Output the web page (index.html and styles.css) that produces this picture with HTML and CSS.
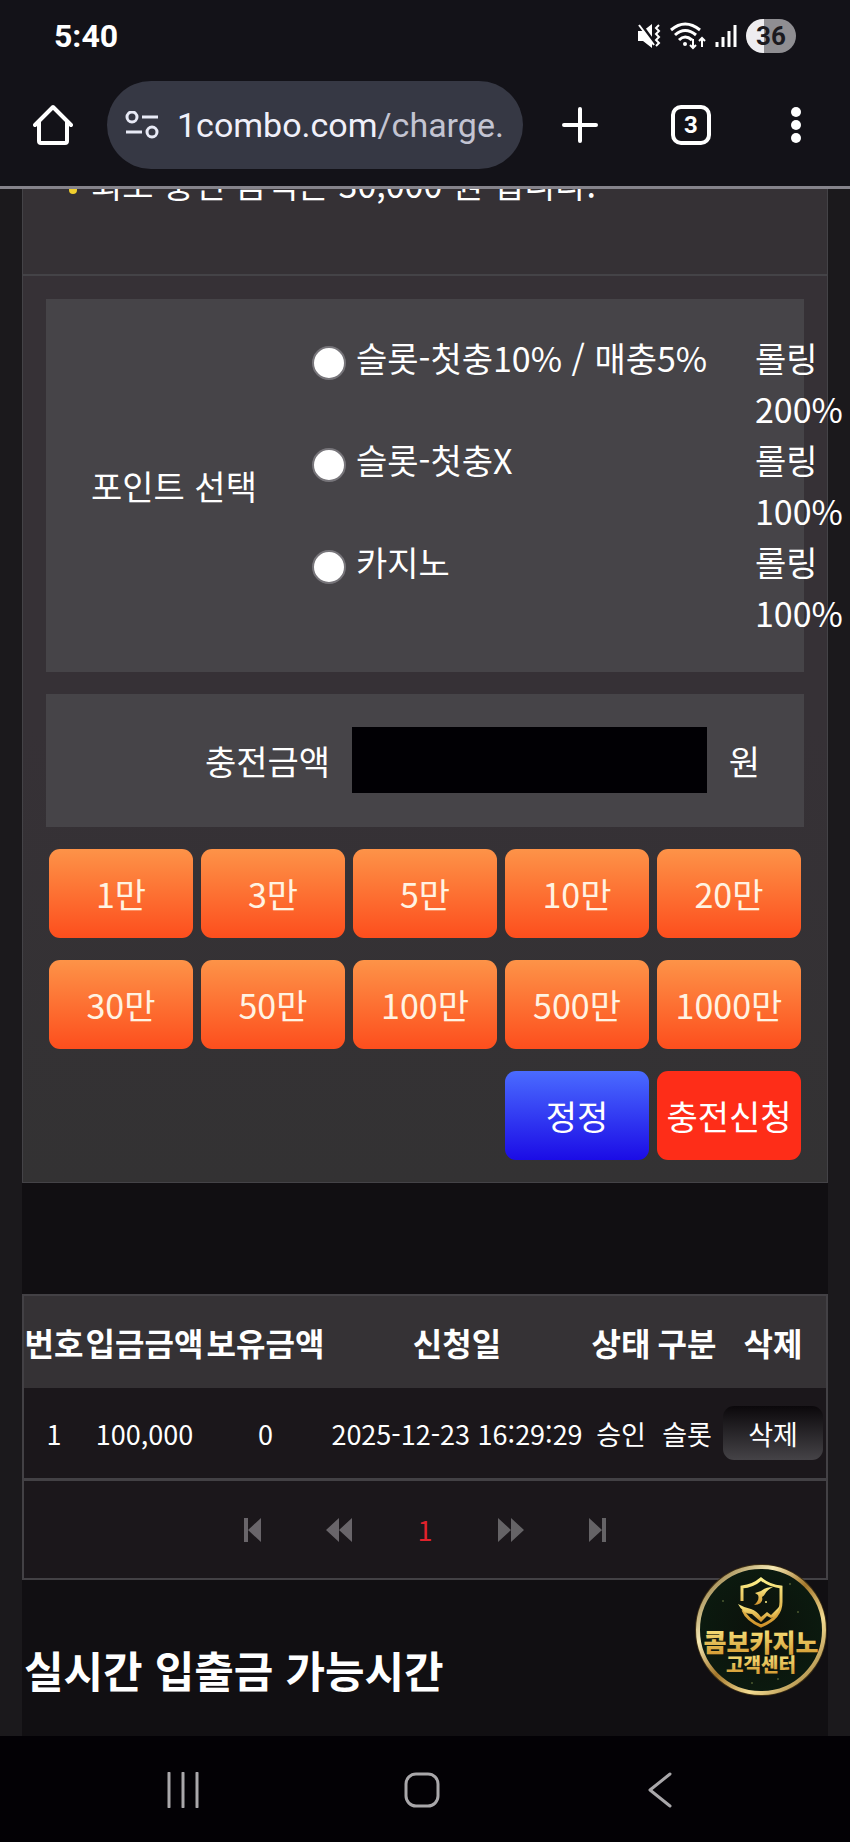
FILE: index.html
```html
<!DOCTYPE html>
<html lang="ko">
<head>
    <meta charset="UTF-8">
    <meta name="viewport" content="width=device-width, initial-scale=1">
    <title>충전신청</title>
    <link rel="stylesheet" href="styles.css">
</head>
<body>
<div class="status-bar">
    <span class="clock">5:40</span>
    <div class="status-icons">
        <svg class="ico-mute" width="24" height="26" viewBox="0 0 24 26">
            <path d="M1 8h5l9-7v24l-9-7H1z" fill="#fff"/>
            <path d="M3 0l16 22" stroke="#131218" stroke-width="3"/>
            <path d="M2 2l15 20" stroke="#fff" stroke-width="2"/>
            <path d="M22 2l-3 3 3 3-3 3 3 3-3 3 3 3-3 3" fill="none" stroke="#fff" stroke-width="2"/>
        </svg>
        <svg class="ico-wifi" width="36" height="28" viewBox="0 0 36 28">
            <g fill="none" stroke="#fff" stroke-width="3">
                <path d="M1 8q14-12 29 0"/>
                <path d="M5 13q10-9 21 0"/>
                <path d="M9 18q6-6 13 0"/>
            </g>
            <circle cx="15" cy="22" r="2" fill="#fff"/>
            <path d="M23 17v9M20 23l3 3 3-3M32 25v-9M29 19l3-3 3 3" fill="none" stroke="#fff" stroke-width="2"/>
        </svg>
        <svg class="ico-signal" width="22" height="24" viewBox="0 0 22 24">
            <path d="M2 18v5M8 13v10M14 7v16M20 1v22" stroke="#fff" stroke-width="3"/>
        </svg>
        <span class="battery">36</span>
    </div>
</div>

<div class="toolbar">
    <button class="tool-btn" type="button" aria-label="홈">
        <svg width="40" height="42" viewBox="0 0 40 42">
            <path d="M2 21L20 3l18 18M6 18v19q0 2 2 2h24q2 0 2-2V18" fill="none" stroke="#fff" stroke-width="4" stroke-linejoin="round" stroke-linecap="round"/>
        </svg>
    </button>
    <button class="address" type="button">
        <svg width="34" height="28" viewBox="0 0 34 28">
            <g fill="none" stroke="#e8eaf6" stroke-width="3">
                <circle cx="7" cy="6" r="5"/>
                <circle cx="27" cy="21" r="5"/>
                <path d="M17 6h16M1 21h16"/>
            </g>
        </svg>
        <span class="url">1combo.com<span class="path">/charge.</span></span>
    </button>
    <div class="tools">
        <button class="tool-btn add" type="button" aria-label="새 탭">
            <svg width="36" height="36" viewBox="0 0 36 36">
                <path d="M18 2v32M2 18h32" stroke="#fff" stroke-width="4" stroke-linecap="round"/>
            </svg>
        </button>
        <button class="tool-btn tabs" type="button">3</button>
        <button class="tool-btn more" type="button" aria-label="메뉴">
            <svg width="10" height="36" viewBox="0 0 10 36">
                <g fill="#fff">
                    <circle cx="5" cy="5" r="5"/>
                    <circle cx="5" cy="18" r="5"/>
                    <circle cx="5" cy="31" r="5"/>
                </g>
            </svg>
        </button>
    </div>
</div>

<div class="page">
    <div class="content">
        <ul class="notice">
            <li>최소 충전 금액은 30,000 원 입니다.</li>
        </ul>

        <form class="charge">
            <div class="box point">
                <span class="point-title">포인트 선택</span>
                <div class="point-list">
                    <label for="p1"><input type="radio" name="point" id="p1"/>슬롯-첫충10% / 매충5%</label>
                    <span class="rolling">롤링 200%</span>
                    <label for="p2"><input type="radio" name="point" id="p2"/>슬롯-첫충X</label>
                    <span class="rolling">롤링 100%</span>
                    <label for="p3"><input type="radio" name="point" id="p3"/>카지노</label>
                    <span class="rolling">롤링 100%</span>
                </div>
            </div>
            <div class="box amount">
                <label for="money">충전금액</label>
                <input type="text" id="money"/>
                <span>원</span>
            </div>
            <div class="btn-wrap">
                <button class="btn" type="button">1만</button>
                <button class="btn" type="button">3만</button>
                <button class="btn" type="button">5만</button>
                <button class="btn" type="button">10만</button>
                <button class="btn" type="button">20만</button>
                <button class="btn" type="button">30만</button>
                <button class="btn" type="button">50만</button>
                <button class="btn" type="button">100만</button>
                <button class="btn" type="button">500만</button>
                <button class="btn" type="button">1000만</button>
                <button class="btn reset" type="reset">정정</button>
                <button class="btn submit" type="button">충전신청</button>
            </div>
        </form>

        <table class="history">
            <colgroup>
                <col class="c-no">
                <col class="c-money">
                <col class="c-money">
                <col>
                <col class="c-state">
                <col class="c-state">
                <col class="c-del">
            </colgroup>
            <thead>
            <tr>
                <th>번호</th>
                <th>입금금액</th>
                <th>보유금액</th>
                <th>신청일</th>
                <th>상태</th>
                <th>구분</th>
                <th>삭제</th>
            </tr>
            </thead>
            <tbody>
            <tr>
                <td>1</td>
                <td>100,000</td>
                <td>0</td>
                <td>2025-12-23 16:29:29</td>
                <td>승인</td>
                <td>슬롯</td>
                <td><button class="del" type="button">삭제</button></td>
            </tr>
            </tbody>
        </table>
        <div class="paging">
            <a href="#" aria-label="처음">
                <svg width="26" height="26" viewBox="0 0 26 26"><path d="M4 1h4v24H4zM21 1v24L8 13z" fill="#69656a"/></svg>
            </a>
            <a href="#" aria-label="이전">
                <svg width="26" height="26" viewBox="0 0 26 26"><path d="M13 1v24L0 13zM26 1v24L13 13z" fill="#69656a"/></svg>
            </a>
            <a href="#" class="on">1</a>
            <a href="#" aria-label="다음">
                <svg width="26" height="26" viewBox="0 0 26 26"><path d="M0 1v24l13-12zM13 1v24l13-12z" fill="#656366"/></svg>
            </a>
            <a href="#" aria-label="마지막">
                <svg width="26" height="26" viewBox="0 0 26 26"><path d="M5 1v24l13-12zM18 1h4v24h-4z" fill="#656366"/></svg>
            </a>
        </div>

        <h2 class="time-title">실시간 입출금 가능시간</h2>
    </div>

    <a href="#" class="cs-badge">
        <svg width="134" height="134" viewBox="0 0 134 134">
            <defs>
                <linearGradient id="gold" x1="0" y1="0" x2="0" y2="1">
                    <stop offset="0" stop-color="#fdf08a"/>
                    <stop offset="1" stop-color="#cf9129"/>
                </linearGradient>
                <linearGradient id="ring" x1="0" y1="0" x2="1" y2="1">
                    <stop offset="0" stop-color="#70551f"/>
                    <stop offset="0.3" stop-color="#f6e9b4"/>
                    <stop offset="0.5" stop-color="#a4772b"/>
                    <stop offset="0.7" stop-color="#f3dc93"/>
                    <stop offset="1" stop-color="#8d6723"/>
                </linearGradient>
                <radialGradient id="green">
                    <stop offset="0" stop-color="#0c110b"/>
                    <stop offset="1" stop-color="#0b1a0f"/>
                </radialGradient>
            </defs>
            <circle cx="67" cy="67" r="66" fill="#3f3014"/>
            <circle cx="67" cy="67" r="63" fill="url(#green)" stroke="url(#ring)" stroke-width="4"/>
            <g fill="#4d5a30">
                <circle cx="29" cy="38" r="1"/>
                <circle cx="96" cy="21" r="1"/>
                <circle cx="104" cy="49" r="1"/>
                <circle cx="58" cy="120" r="1"/>
                <circle cx="84" cy="116" r="1"/>
            </g>
            <!-- 방패 -->
            <path d="M48 38V24q11-1 19-8 9 7 20 8v15q0 16-20 24-14-6-18-16" fill="none" stroke="url(#gold)" stroke-width="3"/>
            <path d="M44 41q7 4 13 5 6 2 10 8l6-5 4 3 9-9q-3 11-9 12l-4-2-6 6-9-8q-9 0-14-10z" fill="url(#gold)"/>
            <path d="M61 30l6-2q5-4 12-4-6 3-8 7-1 2-3 3 2 7-8 8 6-5 4-10z" fill="url(#gold)"/>
            <circle cx="72" cy="39" r="1" fill="#fdf08a"/>
            <text class="cs-name" x="67" y="89" text-anchor="middle" fill="url(#gold)">콤보카지노</text>
            <text class="cs-sub" x="67" y="109" text-anchor="middle" fill="url(#gold)">고객센터</text>
        </svg>
    </a>
</div>

<div class="nav-bar">
    <button type="button" aria-label="최근 앱">
        <svg width="36" height="36" viewBox="0 0 36 36">
            <path d="M3 1v34M17 1v34M31 1v34" stroke="#a9a7aa" stroke-width="3" stroke-linecap="round"/>
        </svg>
    </button>
    <button type="button" aria-label="홈 화면">
        <svg width="36" height="36" viewBox="0 0 36 36">
            <rect x="2" y="2" width="32" height="32" rx="10" fill="none" stroke="#a9a7aa" stroke-width="3"/>
        </svg>
    </button>
    <button type="button" aria-label="뒤로">
        <svg width="36" height="36" viewBox="0 0 36 36">
            <path d="M28 2L8 18l20 16" fill="none" stroke="#a9a7aa" stroke-width="3" stroke-linecap="round" stroke-linejoin="round"/>
        </svg>
    </button>
</div>
</body>
</html>
```

FILE: styles.css
```css
* {
    box-sizing: border-box;
}

body {
    display: flex;
    flex-direction: column;
    min-height: 100vh;
    margin: 0;
    background-color: #131218;
    font: 34px/51px "Noto Sans CJK KR", "Noto Sans", sans-serif;
    color: #fff;
}

button {
    padding: 0;
    border: none;
    background: none;
    font: inherit;
    color: inherit;
}

svg {
    display: block;
    flex: none;
}

/*상태바*/
.status-bar {
    display: flex;
    justify-content: space-between;
    align-items: center;
    height: 72px;
    padding: 0 54px;
}

.clock {
    font: bold 32px/40px Roboto, sans-serif;
}

.status-icons {
    display: flex;
    align-items: center;
    gap: 9px;
}

.battery {
    width: 50px;
    height: 34px;
    border-radius: 17px;
    background: linear-gradient(to right, #eeedf0 36%, #8f8e92 36%);
    font: bold 26px/34px Roboto, sans-serif;
    text-align: center;
    color: #1b1a1f;
}

/*브라우저 툴바*/
.toolbar {
    display: flex;
    align-items: center;
    gap: 34px;
    height: 117px;
    padding: 0 37px 8px 33px;
    border-bottom: 3px solid #85838b;
}

.tool-btn {
    display: flex;
    flex: none;
    justify-content: center;
    align-items: center;
}

.address {
    display: flex;
    flex: 1;
    align-items: center;
    gap: 18px;
    min-width: 0;
    height: 88px;
    padding: 0 17px 0 18px;
    border-radius: 44px;
    background-color: #363844;
}

.url {
    white-space: nowrap;
    text-align: left;
    font: 34px/48px Roboto, sans-serif;
    color: #f0f0fa;
}

.url .path {
    color: #c3c4d2;
}

.tools {
    display: flex;
    align-items: center;
    gap: 68px;
}

.add {
    width: 46px;
}

.tabs {
    width: 40px;
    height: 40px;
    border: 4px solid #fff;
    border-radius: 10px;
    font: bold 24px/32px Roboto, sans-serif;
}

.more {
    width: 34px;
}

/*본문*/
.page {
    position: relative;
    flex: 1;
    overflow: hidden;
    padding: 0 22px;
    background-color: #1b191c;
}

.content {
    min-height: 100%;
    background-color: #110f12;
}

.notice {
    height: 117px;
    margin: -32px 0 0;
    padding: 0 24px 0 69px;
    border: 1px solid #444347;
    border-bottom: none;
    background-color: #353135;
    list-style: none;
}

.notice li {
    display: flex;
    align-items: center;
}

.notice li::before {
    content: "";
    width: 8px;
    height: 8px;
    margin: 12px 14px 0 -23px;
    border-radius: 50%;
    background-color: #f0cf2e;
}

.charge {
    display: flex;
    flex-direction: column;
    gap: 22px;
    padding: 23px 23px 22px;
    border: 1px solid #444347;
    border-top: 2px solid #444347;
    background-image: linear-gradient(#363136 50%, #333233);
}

.box {
    background-color: #464448;
}

.point {
    display: flex;
    align-items: center;
    padding: 33px 0 34px 45px;
}

.point-title {
    width: 221px;
}

.point-list {
    display: grid;
    flex: 1;
    grid-template-columns: 1fr 49px;
}

.point-list label {
    display: flex;
    gap: 10px;
}

.point-list input {
    appearance: none;
    width: 34px;
    height: 34px;
    margin: 14px 0 0;
    border: 2px solid #77757a;
    border-radius: 50%;
    background-color: #fff;
}

/*좁은 칸에서 글자가 칸 밖으로 넘침*/
.rolling {
    word-break: keep-all;
}

.amount {
    display: flex;
    align-items: center;
    gap: 22px;
    padding: 33px 44px 34px 0;
}

.amount label {
    width: 284px;
    text-align: right;
}

.amount input {
    flex: 1;
    min-width: 0;
    height: 66px;
    padding: 0 12px;
    border: none;
    background-color: #010004;
    font: inherit;
    color: #fff;
}

.btn-wrap {
    display: grid;
    grid-template-columns: repeat(5, 1fr);
    gap: 22px 8px;
    padding: 0 3px;
}

.btn {
    height: 89px;
    border-radius: 11px;
    background-image: linear-gradient(#fd9348, #fd4e1d);
    color: #fff3e2;
    white-space: nowrap;
}

.btn.reset {
    grid-column: 4;
    background-image: linear-gradient(#4a6bff, #1b0ce6);
    color: #fff;
}

.btn.submit {
    background: #fe2d18;
    color: #fff;
}

/*충전내역*/
.history {
    width: 100%;
    margin-top: 111px;
    border: 2px solid #434145;
    border-bottom: none;
    border-spacing: 0;
    table-layout: fixed;
    background-color: #1b171b;
    text-align: center;
    white-space: nowrap;
}

.c-no {
    width: 60px;
}

.c-money {
    width: 121px;
}

.c-state {
    width: 66px;
}

.c-del {
    width: 106px;
}

.history th {
    height: 92px;
    padding: 0;
    background-color: #353235;
    font-size: 32px;
}

.history td {
    height: 90px;
    padding: 0;
    font-size: 27px;
}

.del {
    width: 100px;
    height: 54px;
    border-radius: 11px;
    background-image: linear-gradient(#0b080b, #454347);
}

.paging {
    display: flex;
    justify-content: center;
    align-items: center;
    gap: 60px;
    height: 102px;
    border: 2px solid #434145;
    border-top-width: 3px;
    background-color: #1b171b;
    font-size: 27px;
}

.paging a {
    width: 26px;
    text-align: center;
    text-decoration: none;
}

.paging .on {
    color: #e0222c;
}

.time-title {
    margin: 0;
    padding: 56px 2px 34px;
    font-size: 43px;
    line-height: 66px;
}

.cs-badge {
    position: absolute;
    right: 22px;
    bottom: 39px;
}

.cs-name {
    font-size: 25px;
    font-weight: 900;
}

.cs-sub {
    font-size: 19px;
    font-weight: 900;
}

/*하단 내비게이션*/
.nav-bar {
    display: flex;
    justify-content: space-around;
    align-items: center;
    height: 107px;
    padding: 0 71px 0 65px;
    background-color: #030105;
}
```
